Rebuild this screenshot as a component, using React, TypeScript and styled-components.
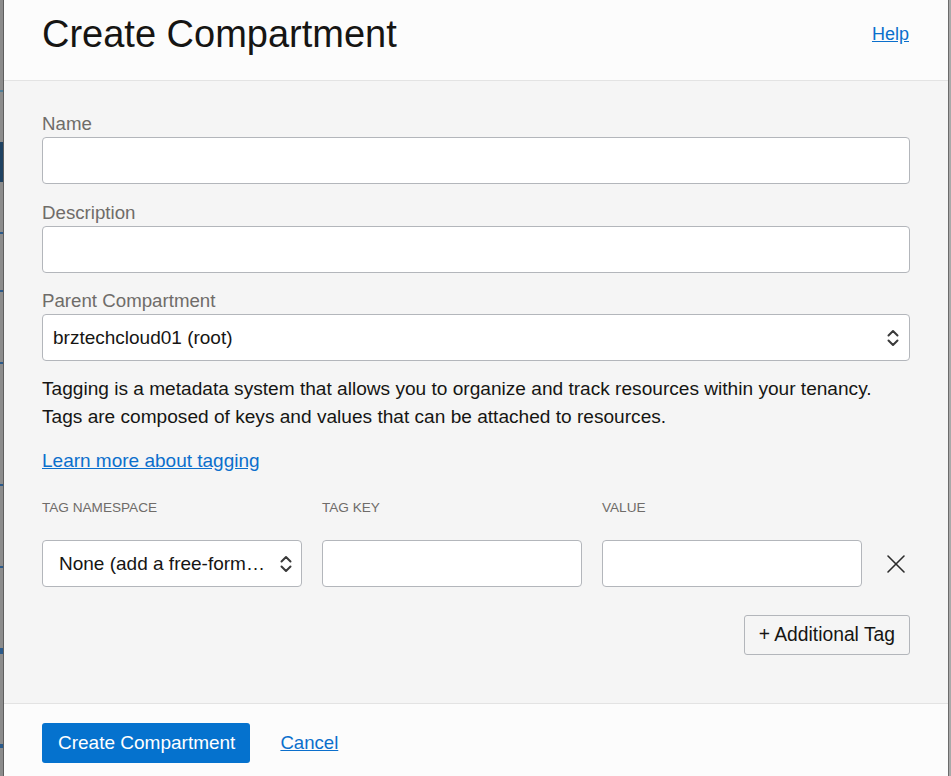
import React from "react";
import styled, { createGlobalStyle } from "styled-components";

const Global = createGlobalStyle`
  html, body { margin: 0; padding: 0; }
  body { font-family: "Liberation Sans", Arial, sans-serif; color: #161513; }
  * { box-sizing: border-box; }
`;

const Page = styled.div`
  display: flex;
  width: 951px;
  height: 776px;
  overflow: hidden;
  background: #7d7d7d;
`;

const LeftStrip = styled.div`
  flex: 0 0 4px;
  display: flex;
  flex-direction: column;
  background: #8c8c8c;
  border-right: 1px solid #5e5e5e;
`;

const StripMark = styled.div<{ $h: number; $c: string; $mt: number }>`
  height: ${(p) => p.$h}px;
  margin-top: ${(p) => p.$mt}px;
  background: ${(p) => p.$c};
`;

const RightStrip = styled.div`
  flex: 0 0 3px;
  background: #a9a9a9;
  border-left: 1px solid #6b6b6b;
`;

const Panel = styled.div`
  flex: 1;
  min-width: 0;
  display: flex;
  flex-direction: column;
  background: #f5f5f5;
`;

const Header = styled.header`
  height: 81px;
  display: flex;
  align-items: flex-start;
  justify-content: space-between;
  padding: 12px 38px 0 38px;
  background: #fcfcfc;
  border-bottom: 1px solid #e3e3e3;
`;

const Title = styled.h1`
  margin: 0;
  font-size: 38px;
  font-weight: 400;
  line-height: 44px;
  color: #161513;
`;

const Link = styled.a<{ $size?: number }>`
  color: #0b6fcc;
  text-decoration: underline;
  font-size: ${(p) => p.$size ?? 19}px;
  cursor: pointer;
`;

const HelpLink = styled(Link)`
  margin-top: 12px;
  margin-right: 1px;
`;

const Body = styled.main`
  flex: 1;
  padding: 32px 38px 0 38px;
  display: flex;
  flex-direction: column;
`;

const Field = styled.div<{ $mb?: number }>`
  display: flex;
  flex-direction: column;
  margin-bottom: ${(p) => p.$mb ?? 17}px;
`;

const Label = styled.label`
  font-size: 18.7px;
  line-height: 22px;
  color: #6f6c69;
  margin-bottom: 2px;
`;

const Input = styled.input`
  height: 47px;
  width: 100%;
  border: 1px solid #b3b6bb;
  border-radius: 4px;
  background: #fff;
  font: inherit;
  font-size: 19px;
  padding: 0 10px;
`;

const SelectBox = styled.div<{ $pl: number; $pr: number; $gap: number }>`
  height: 47px;
  width: 100%;
  border: 1px solid #b3b6bb;
  border-radius: 4px;
  background: #fff;
  display: flex;
  align-items: center;
  padding: 0 ${(p) => p.$pr}px 0 ${(p) => p.$pl}px;
  font-size: 19px;
  color: #161513;
  gap: ${(p) => p.$gap}px;
`;

const SelectText = styled.span`
  flex: 1;
  min-width: 0;
  white-space: nowrap;
  overflow: hidden;
  text-overflow: ellipsis;
`;

const Para = styled.p`
  margin: 0;
  font-size: 19.1px;
  line-height: 28px;
  color: #161513;
`;

const LearnRow = styled.div`
  margin-top: 19px;
  line-height: 22px;
`;

const TagGrid = styled.div`
  margin-top: 27px;
  display: grid;
  grid-template-columns: 260px 260px 260px 1fr;
  column-gap: 20px;
  row-gap: 24px;
  align-items: center;
`;

const ColHead = styled.div`
  font-size: 13.6px;
  line-height: 16px;
  color: #6f6c69;
  text-transform: uppercase;
`;

const RemoveBtn = styled.button`
  justify-self: center;
  border: none;
  background: transparent;
  padding: 0;
  width: 24px;
  height: 24px;
  display: flex;
  align-items: center;
  justify-content: center;
  cursor: pointer;
`;

const ActionsRow = styled.div`
  display: flex;
  justify-content: flex-end;
  margin-top: 28px;
`;

const SecondaryBtn = styled.button`
  height: 40px;
  padding: 0 14px;
  border: 1px solid #b3b6bb;
  border-radius: 3px;
  background: #f5f5f5;
  font-family: inherit;
  font-size: 19.3px;
  color: #161513;
`;

const Footer = styled.footer`
  height: 73px;
  background: #fcfcfc;
  border-top: 1px solid #e3e3e3;
  display: flex;
  align-items: center;
  gap: 30px;
  padding: 5px 38px 0;
`;

const PrimaryBtn = styled.button`
  height: 40px;
  padding: 0 15px 0 16px;
  border: none;
  border-radius: 3px;
  background: #0572ce;
  color: #fff;
  font-family: inherit;
  font-size: 19px;
`;

const Chevrons = () => (
  <svg width="14" height="18" viewBox="0 0 14 18" fill="none" stroke="#3a3a3a" strokeWidth="2" strokeLinecap="round" strokeLinejoin="round">
    <path d="M2.5 6.5 L7 2 L11.5 6.5" />
    <path d="M2.5 11.5 L7 16 L11.5 11.5" />
  </svg>
);

const CloseIcon = () => (
  <svg width="20" height="20" viewBox="0 0 20 20" fill="none" stroke="#2b2b2b" strokeWidth="1.6" strokeLinecap="round">
    <path d="M2 2 L18 18" />
    <path d="M18 2 L2 18" />
  </svg>
);

export default function App() {
  return (
    <>
      <Global />
      <Page>
        <LeftStrip>
          <StripMark $mt={90} $h={2} $c="#4f7f99" />
          <StripMark $mt={50} $h={40} $c="#1f4262" />
          <StripMark $mt={50} $h={2} $c="#2b5a8a" />
          <StripMark $mt={56} $h={2} $c="#2b5a8a" />
          <StripMark $mt={70} $h={2} $c="#2b5a8a" />
          <StripMark $mt={120} $h={2} $c="#2b5a8a" />
          <StripMark $mt={80} $h={2} $c="#2b5a8a" />
          <StripMark $mt={80} $h={6} $c="#2b5a8a" />
          <StripMark $mt={90} $h={4} $c="#2b5a8a" />
        </LeftStrip>
        <Panel>
          <Header>
            <Title>Create Compartment</Title>
            <HelpLink $size={18}>Help</HelpLink>
          </Header>
          <Body>
            <Field $mb={18}>
              <Label>Name</Label>
              <Input />
            </Field>
            <Field $mb={17}>
              <Label>Description</Label>
              <Input />
            </Field>
            <Field $mb={14}>
              <Label>Parent Compartment</Label>
              <SelectBox $pl={10} $pr={9} $gap={8}>
                <SelectText>brztechcloud01 (root)</SelectText>
                <Chevrons />
              </SelectBox>
            </Field>
            <Para>
              Tagging is a metadata system that allows you to organize and track resources within your tenancy.
              <br />
              Tags are composed of keys and values that can be attached to resources.
            </Para>
            <LearnRow>
              <Link>Learn more about tagging</Link>
            </LearnRow>
            <TagGrid>
              <ColHead>Tag Namespace</ColHead>
              <ColHead>Tag Key</ColHead>
              <ColHead>Value</ColHead>
              <span />
              <SelectBox $pl={16} $pr={8} $gap={14}>
                <SelectText>None (add a free-form tag)</SelectText>
                <Chevrons />
              </SelectBox>
              <Input />
              <Input />
              <RemoveBtn aria-label="Remove tag">
                <CloseIcon />
              </RemoveBtn>
            </TagGrid>
            <ActionsRow>
              <SecondaryBtn>+ Additional Tag</SecondaryBtn>
            </ActionsRow>
          </Body>
          <Footer>
            <PrimaryBtn>Create Compartment</PrimaryBtn>
            <Link $size={18.6}>Cancel</Link>
          </Footer>
        </Panel>
        <RightStrip />
      </Page>
    </>
  );
}
